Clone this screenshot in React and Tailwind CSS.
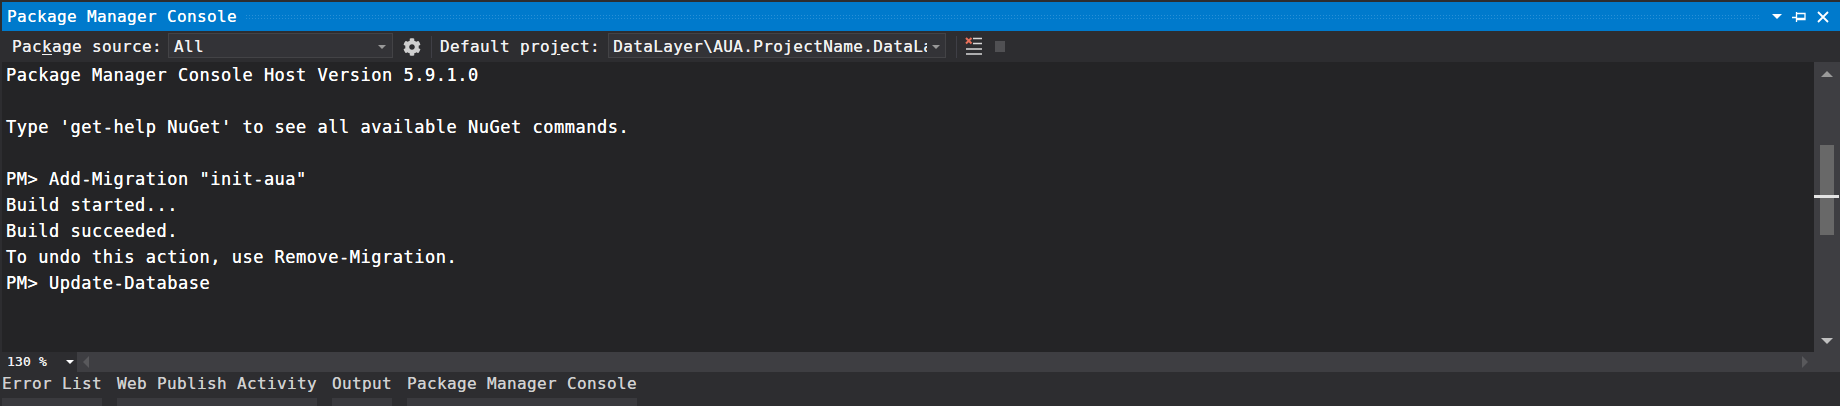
import { FaCog } from 'react-icons/fa';

const consoleLines = [
  'Package Manager Console Host Version 5.9.1.0',
  '',
  "Type 'get-help NuGet' to see all available NuGet commands.",
  '',
  'PM> Add-Migration "init-aua"',
  'Build started...',
  'Build succeeded.',
  'To undo this action, use Remove-Migration.',
  'PM> Update-Database',
];

const tabs = [
  { name: 'Error List', width: 'w-[100px]' },
  { name: 'Web Publish Activity', width: 'w-[200px]' },
  { name: 'Output', width: 'w-[60px]' },
  { name: 'Package Manager Console', width: 'w-[230px]' },
];

function Caret({ color = 'border-t-[#999999]', className = '' }) {
  return <div className={`w-0 h-0 border-x-[4px] border-x-transparent border-t-[4px] ${color} ${className}`}></div>;
}

function TitleBar() {
  return (
    <div className="flex items-center h-[29px] bg-[#007acc] pl-[5px] text-white">
      <span>Package Manager Console</span>
      {/* grip dots */}
      <div className="flex-1 h-[6px] ml-[8px] bg-[radial-gradient(circle,#2a90d6_1px,transparent_1px)] bg-[length:3px_3px]"></div>
      <div className="flex items-center w-[80px] shrink-0">
        <div className="w-0 h-0 ml-[12px] border-x-[5px] border-x-transparent border-t-[5px] border-t-white"></div>
        <svg width="14" height="10" viewBox="0 0 14 10" className="ml-[10px]" fill="none" stroke="white">
          <path d="M0 5.5h4M4.5 0v10M5 1.5h8v6h-8M5 6.5h8" strokeWidth="1.3" />
        </svg>
        <svg width="12" height="12" viewBox="0 0 12 12" className="ml-[11px]" fill="none" stroke="white" strokeWidth="1.8">
          <path d="M1 1l10 10M11 1L1 11" />
        </svg>
      </div>
    </div>
  );
}

function Toolbar() {
  return (
    <div className="flex items-center h-[31px] bg-[#2d2d30] text-[#f1f1f1]">
      <span className="ml-[10px]">Pac<span className="underline underline-offset-2">k</span>age source:</span>
      <div className="flex items-center justify-between w-[225px] h-[25px] ml-[6px] mb-[2px] pt-[2px] pl-[5px] pr-[6px] bg-[#333337] border border-[#434346]">
        <span>All</span>
        <Caret />
      </div>
      <FaCog size={18} className="ml-[10px] text-[#cfcfcf]" />
      <div className="w-px h-[22px] ml-[10px] bg-[#3f3f46]"></div>
      <span className="ml-[8px]">Default pro<span className="underline underline-offset-2">j</span>ect:</span>
      <div className="flex items-center w-[338px] h-[25px] ml-[8px] mb-[2px] pt-[2px] pl-[4px] bg-[#333337] border border-[#434346]">
        <span className="w-[314px] overflow-hidden whitespace-nowrap">DataLayer\AUA.ProjectName.DataLayer</span>
        <Caret className="ml-[5px]" />
      </div>
      <div className="w-px h-[22px] ml-[10px] bg-[#3f3f46]"></div>
      <svg width="17" height="19" viewBox="0 0 17 19" className="ml-[8px]">
        <path d="M1 1l5.5 5.5M6.5 1L1 6.5" stroke="#e8705a" strokeWidth="2" />
        <path d="M8 1.5h9M8 6.5h9M1 12h16M1 17h16" stroke="#d8d8d8" strokeWidth="1.6" />
      </svg>
      <div className="w-[10px] h-[11px] ml-[13px] mb-[1px] bg-[#505053]"></div>
    </div>
  );
}

function VerticalScroll() {
  return (
    <div className="relative flex flex-col items-center w-[26px] shrink-0 bg-[#3e3e42]">
      <div className="w-0 h-0 mt-[9px] border-x-[6px] border-x-transparent border-b-[6px] border-b-[#9a9a9a]"></div>
      <div className="w-[14px] h-[90px] mt-[68px] bg-[#686868]"></div>
      <div className="flex-1"></div>
      <div className="w-0 h-0 mb-[8px] border-x-[6px] border-x-transparent border-t-[6px] border-t-[#c0c0c0]"></div>
      {/* caret marker on the scrollbar */}
      <div className="absolute left-0 top-[133px] w-[25px] h-[3px] bg-[#e4e4e4]"></div>
    </div>
  );
}

export default function App() {
  return (
    <div className="w-[1840px] h-[406px] overflow-hidden flex flex-col bg-[#2d2d30] pt-[2px] text-[16px] leading-[26px] tracking-[0.37px] font-['DejaVu_Sans_Mono',monospace] [text-shadow:0_0_0.4px_currentColor]">
      <div className="pl-[2px]">
        <TitleBar />
        <Toolbar />
      </div>
      <div className="flex flex-col h-[310px] pl-[2px]">
        <div className="flex flex-1 min-h-0 bg-[#242426]">
          <div className="flex-1 pl-[4px] text-[17px] tracking-[0.51px] text-white whitespace-pre [text-shadow:0_0_0.6px_#ffffff]">
            {consoleLines.map((line, i) => (
              <div key={i} className="h-[26px]">{line}</div>
            ))}
          </div>
          <VerticalScroll />
        </div>
        <div className="flex items-center h-[20px] bg-[#3e3e42]">
          <div className="flex items-center justify-between w-[75px] h-full pl-[5px] pr-[3px] bg-[#2d2d30] text-[13px] tracking-[0.2px] text-[#f1f1f1]">
            <span>130 %</span>
            <Caret color="border-t-white" />
          </div>
          <div className="w-0 h-0 ml-[6px] border-y-[6px] border-y-transparent border-r-[6px] border-r-[#59595c]"></div>
          <div className="flex-1"></div>
          <div className="w-0 h-0 mr-[32px] border-y-[6px] border-y-transparent border-l-[6px] border-l-[#59595c]"></div>
        </div>
      </div>
      <div className="flex gap-[15px] pl-[2px] text-[#d0d0d0]">
        {tabs.map((tab) => (
          <div key={tab.name} className={`${tab.width} flex flex-col`}>
            <span className="h-[26px] leading-[24px] whitespace-nowrap">{tab.name}</span>
            <div className="h-[8px] bg-[#3a3a3e]"></div>
          </div>
        ))}
      </div>
    </div>
  );
}
